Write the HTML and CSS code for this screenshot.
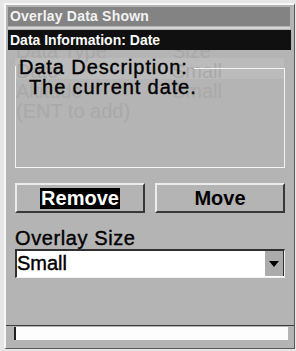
FILE: index.html
```
<!DOCTYPE html>
<html>
<head>
<meta charset="utf-8">
<link rel="stylesheet" href="styles.css">
</head>
<body>
<div class="window">
  <div class="title">Overlay Data Shown</div>
  <div class="sep"></div>
  <div class="infobar">Data Information: Date</div>
  <div class="content">
    <div class="ghost">
      <div class="band"></div>
      <div class="grow"><span class="c1">Data Type</span><span class="c2">Size</span></div>
      <div class="grow"><span class="c1">Date</span><span class="c2">Small</span></div>
      <div class="grow"><span class="c1">Altitude</span><span class="c2">Small</span></div>
      <div class="grow"><span class="c1">(ENT to add)</span></div>
    </div>
    <div class="group">
      <div class="group-head">
        <div class="corner"></div>
        <div class="legend">Data Description:</div>
        <div class="fill"></div>
      </div>
      <div class="group-body">The current date.</div>
    </div>
    <div class="buttons">
      <div class="btn"><span class="sel">Remove</span></div>
      <div class="btn">Move</div>
    </div>
    <div class="label">Overlay Size</div>
    <div class="select">
      <div class="value">Small</div>
      <div class="arrow"><svg width="10" height="6" viewBox="0 0 10 6"><polygon points="0,0 10,0 5,6" fill="#000"/></svg></div>
    </div>
  </div>
  <div class="status">
    <div class="hr"></div>
    <div class="field"></div>
  </div>
</div>
</body>
</html>
```
FILE: styles.css
```
html, body {
  margin: 0;
  padding: 0;
}
body {
  width: 296px;
  height: 351px;
  overflow: hidden;
  background: #e6e6e6;
  font-family: "Liberation Sans", Arial, sans-serif;
  color: #000;
}
.window {
  margin: 3px 0 0 4px;
  width: 288px;
  height: 343px;
  border-top: 2px solid #f8f8f8;
  border-left: 2px solid #f8f8f8;
  border-right: 1px solid #5a5a5a;
  border-bottom: 1px solid #5a5a5a;
  background: #b4b4b4;
  display: flex;
  flex-direction: column;
}
.title {
  margin: 2px 4px 1px 2px;
  height: 19px;
  line-height: 19px;
  background: #838383;
  color: #f2f2f2;
  font-weight: bold;
  font-size: 14px;
  letter-spacing: 0.2px;
  padding-left: 2px;
}
.sep {
  height: 2px;
  margin: 0 4px 1px 2px;
  background: #d4d4d4;
}
.infobar {
  margin: 0 3px 0 2px;
  height: 20px;
  line-height: 20px;
  background: #101010;
  color: #fafafa;
  font-weight: bold;
  font-size: 14px;
  padding-left: 2px;
}
.content {
  position: relative;
  padding: 0 8px 0 9px;
  overflow: hidden;
}
.ghost {
  position: absolute;
  left: 0;
  top: -9px;
  width: 100%;
  font-size: 20px;
  line-height: 20px;
  color: #a9a9a9;
}
.band {
  position: absolute;
  left: 9px;
  top: 17px;
  width: 269px;
  height: 21px;
  background: #bbbbbb;
}
.grow {
  position: relative;
  height: 20px;
  white-space: nowrap;
}
.c1 {
  position: absolute;
  left: 10px;
}
.c2 {
  position: absolute;
  left: 166px;
}
.group {
  position: relative;
  margin-top: 7px;
}
.group-head {
  display: flex;
  height: 20px;
}
.corner {
  width: 3px;
  margin-top: 9px;
  border-left: 1px solid #f4f4f4;
}
.legend {
  font-size: 20px;
  line-height: 20px;
  letter-spacing: 0.9px;
  white-space: nowrap;
  -webkit-text-stroke: 0.4px #000;
}
.fill {
  flex: 1;
  margin: 11px 1px 0 6px;
  border-top: 1px solid #f4f4f4;
  border-right: 1px solid #f4f4f4;
}
.group-body {
  height: 90px;
  margin-right: 1px;
  border-left: 1px solid #f4f4f4;
  border-right: 1px solid #f4f4f4;
  border-bottom: 1px solid #f4f4f4;
  padding-left: 13px;
  font-size: 20px;
  line-height: 20px;
  letter-spacing: 0.9px;
  white-space: nowrap;
  -webkit-text-stroke: 0.4px #000;
}
.buttons {
  display: flex;
  gap: 10px;
  margin-top: 15px;
}
.btn {
  width: 126px;
  height: 26px;
  border-top: 2px solid #ececec;
  border-left: 2px solid #ececec;
  border-bottom: 2px solid #383838;
  border-right: 2px solid #383838;
  display: flex;
  align-items: center;
  justify-content: center;
  font-weight: bold;
  font-size: 20px;
  line-height: 21px;
}
.sel {
  background: #000;
  color: #fff;
  padding: 0 1px;
}
.label {
  margin-top: 15px;
  font-size: 20px;
  line-height: 20px;
  letter-spacing: 0.6px;
  padding-left: 0;
  -webkit-text-stroke: 0.4px #000;
}
.select {
  margin-top: 1px;
  margin-right: 1px;
  height: 26px;
  border-top: 2px solid #303030;
  border-left: 2px solid #303030;
  border-right: 1px solid #f0f0f0;
  border-bottom: 1px solid #f0f0f0;
  background: #fff;
  display: flex;
}
.value {
  flex: 1;
  font-size: 20px;
  line-height: 25px;
  padding-left: 0;
  -webkit-text-stroke: 0.4px #000;
}
.arrow {
  width: 18px;
  height: 25px;
  background: #ababab;
  border-right: 1px solid #303030;
  display: flex;
  align-items: center;
  justify-content: center;
}
.arrow svg {
  display: block;
}
.status {
  margin-top: auto;
  height: 23px;
}
.hr {
  height: 1px;
  background: #3c3c3c;
  margin-bottom: 1px;
}
.field {
  margin-left: 8px;
  width: 272px;
  height: 13px;
  background: #fdfdfd;
  border-left: 2px solid #202020;
}
```
